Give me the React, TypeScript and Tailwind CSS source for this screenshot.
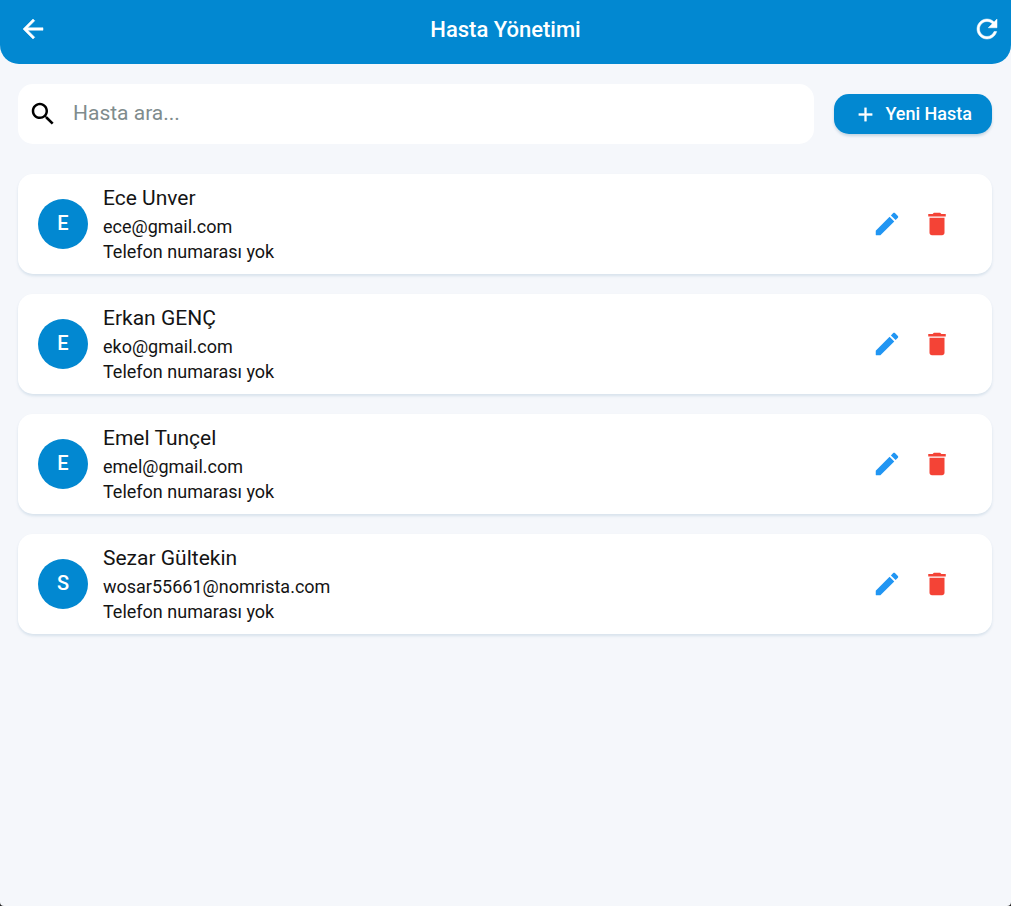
import { useState } from "react";

type Patient = { name: string; email: string; phone?: string };

const patients: Patient[] = [
  { name: "Ece Unver", email: "ece@gmail.com" },
  { name: "Erkan GENÇ", email: "eko@gmail.com" },
  { name: "Emel Tunçel", email: "emel@gmail.com" },
  { name: "Sezar Gültekin", email: "wosar55661@nomrista.com" },
];

const icons = {
  back: "M20 11H7.83l5.59-5.59L12 4l-8 8 8 8 1.41-1.41L7.83 13H20v-2z",
  refresh:
    "M17.65 6.35C16.2 4.9 14.21 4 12 4c-4.42 0-7.99 3.58-7.99 8s3.57 8 7.99 8c3.73 0 6.84-2.55 7.73-6h-2.08c-.82 2.33-3.04 4-5.65 4-3.31 0-6-2.69-6-6s2.69-6 6-6c1.66 0 3.14.69 4.22 1.78L13 11h7V4l-2.35 2.35z",
  search:
    "M15.5 14h-.79l-.28-.27C15.41 12.59 16 11.11 16 9.5 16 5.91 13.09 3 9.5 3S3 5.91 3 9.5 5.91 16 9.5 16c1.61 0 3.09-.59 4.23-1.57l.27.28v.79l5 4.99L20.49 19l-4.99-5zm-6 0C7.01 14 5 11.99 5 9.5S7.01 5 9.5 5 14 7.01 14 9.5 11.99 14 9.5 14z",
  add: "M19 13h-6v6h-2v-6H5v-2h6V5h2v6h6v2z",
  edit: "M3 17.46v3.04c0 .28.22.5.5.5h3.04c.13 0 .26-.05.35-.15L17.81 9.94l-3.75-3.75L3.15 17.1c-.1.1-.15.22-.15.36zM20.71 7.04c.39-.39.39-1.02 0-1.41l-2.34-2.34c-.39-.39-1.02-.39-1.41 0l-1.83 1.83 3.75 3.75 1.83-1.83z",
  trash: "M6 19c0 1.1.9 2 2 2h8c1.1 0 2-.9 2-2V7H6v12zM19 4h-3.5l-1-1h-5l-1 1H5v2h14V4z",
};

function Icon({ path, className = "size-[30px]" }: { path: string; className?: string }) {
  return (
    <svg viewBox="0 0 24 24" fill="currentColor" aria-hidden="true" className={className}>
      <path d={path} />
    </svg>
  );
}

function PatientCard({ patient }: { patient: Patient }) {
  return (
    <li className="flex min-h-[100px] items-center rounded-[15px] bg-white pr-[30px] pl-5 shadow-[0_2px_3px_rgba(2,80,130,0.12)]">
      <div className="flex size-[50px] shrink-0 items-center justify-center rounded-full bg-[#0288d1] pb-0.5 text-xl font-medium text-white">
        {patient.name[0]}
      </div>
      <div className="ml-[15px] min-w-0 flex-1 pb-px text-[#141414]">
        <h2 className="mb-px text-[21px] leading-[30px]">{patient.name}</h2>
        <p className="text-lg leading-[25px]">{patient.email}</p>
        <p className="text-lg leading-[25px]">{patient.phone ?? "Telefon numarası yok"}</p>
      </div>
      <button type="button" aria-label="Düzenle" className="flex size-[50px] items-center justify-center text-[#2196f3]">
        <Icon path={icons.edit} />
      </button>
      <button type="button" aria-label="Sil" className="flex size-[50px] items-center justify-center text-[#f44336]">
        <Icon path={icons.trash} />
      </button>
    </li>
  );
}

export default function App() {
  const [query, setQuery] = useState("");
  const visible = patients.filter((p) => p.name.toLowerCase().includes(query.toLowerCase()));

  return (
    <div className="bg-[#222222] font-[Roboto,sans-serif]">
      <div className="min-h-screen rounded-b-[4px] bg-[#f5f7fb]">
        <header className="grid grid-cols-[1fr_auto_1fr] items-center rounded-b-[19px] bg-[#0288d1] pt-1 pb-2.5 text-white">
          <button type="button" aria-label="Geri" className="ml-2 flex size-[50px] items-center justify-center">
            <Icon path={icons.back} className="size-[30px] stroke-current stroke-[0.4]" />
          </button>
          <h1 className="pt-0.5 text-[22px] leading-8 font-medium">Hasta Yönetimi</h1>
          <button type="button" aria-label="Yenile" className="flex h-[50px] w-12 items-center justify-center justify-self-end">
            <Icon path={icons.refresh} className="size-[30px] stroke-current stroke-[0.4]" />
          </button>
        </header>
        <main className="pt-5 pr-[19px] pb-5 pl-[18px]">
          <div className="flex items-center gap-5">
            <label className="flex h-[60px] min-w-0 flex-1 items-center gap-[15px] rounded-[15px] bg-white px-2.5 text-black">
              <Icon path={icons.search} className="size-[30px] shrink-0" />
              <input
                type="text"
                aria-label="Hasta ara"
                placeholder="Hasta ara..."
                value={query}
                onChange={(e) => setQuery(e.target.value)}
                className="min-w-0 flex-1 bg-transparent text-[21px] outline-none placeholder:text-[#7f8c8d]"
              />
            </label>
            <button
              type="button"
              className="flex h-10 items-center gap-2 rounded-[15px] bg-[#0288d1] px-5 text-lg font-medium text-white shadow-[0_2px_3px_rgba(2,80,130,0.2)]"
            >
              <Icon path={icons.add} className="size-[23px] stroke-current stroke-[0.4]" />
              Yeni Hasta
            </button>
          </div>
          <ul className="mt-[30px] flex flex-col gap-5">
            {visible.map((p) => (
              <PatientCard key={p.email} patient={p} />
            ))}
          </ul>
        </main>
      </div>
    </div>
  );
}
